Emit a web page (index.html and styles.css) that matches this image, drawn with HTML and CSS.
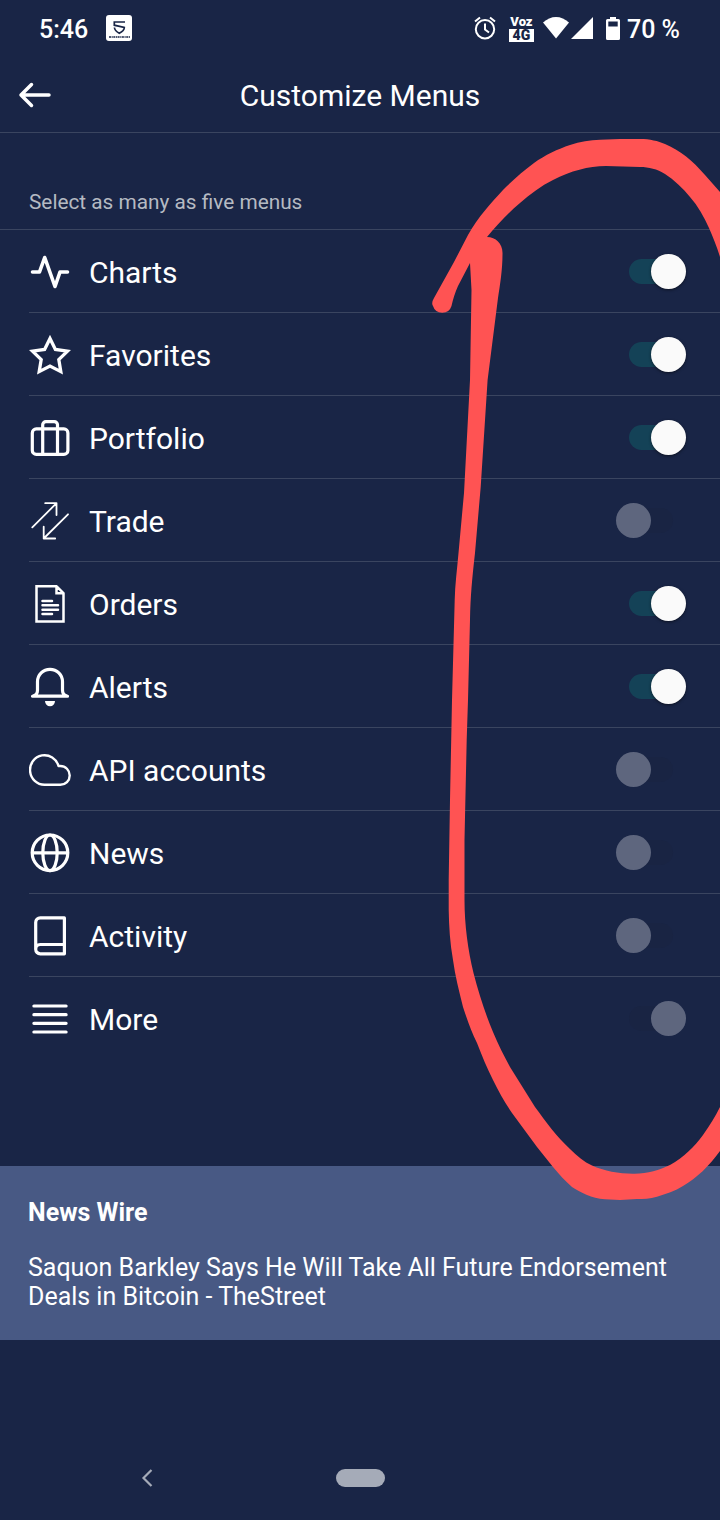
FILE: index.html
```html
<!DOCTYPE html>
<html lang="en">

<head>
    <meta charset="UTF-8">
    <title>Customize Menus</title>
    <link rel="stylesheet" href="styles.css">
</head>

<body>
    <div class="screen">
        <div class="status-bar">
            <span class="time">5:46</span>
            <svg class="app-icon" width="26" height="26" viewBox="0 0 26 26">
                <rect width="26" height="26" rx="3" fill="#fff" />
                <path d="M19 7H8.3v3.200l10 2.200c0 2.500-2 4.300-5 5.800-2.800-1.400-4.600-3-4.900-5.700" fill="none" stroke="#192546" stroke-width="1.700" />
                <path d="M3 22h21" stroke="#192546" stroke-width="1.300" stroke-dasharray="2 .6 1.200 .5" />
            </svg>
            <div class="status-icons">
                <svg class="alarm" width="22" height="24" viewBox="0 0 22 24" fill="none" stroke="#fff" stroke-width="2">
                    <circle cx="11" cy="13.200" r="9.200" />
                    <path d="M11 7.500v6l4 3M1 5.500l5-4M21 5.500l-5-4" />
                </svg>
                <div class="volte">
                    <span class="voz">Voz</span>
                    <span class="lte">4G</span>
                </div>
                <svg class="wifi" width="26" height="22" viewBox="0 0 26 22">
                    <path d="M13 21.500L0 5.600C4 2 8.300 0 13 0s9 2 13 5.600z" fill="#fff" />
                </svg>
                <svg class="signal" width="22" height="22" viewBox="0 0 22 22">
                    <path d="M0 22L22 0v22z" fill="#fff" />
                </svg>
                <svg class="battery" width="14" height="23" viewBox="0 0 14 23">
                    <path d="M4 0h6v2h2.500a1.500 1.500 0 0 1 1.500 1.500v18a1.500 1.500 0 0 1-1.500 1.500h-11A1.500 1.500 0 0 1 0 21.500v-18a1.500 1.500 0 0 1 1.500-1.500H4z" fill="#fff" />
                    <path d="M2.300 4.500h9.400v5H2.300z" fill="#192546" />
                </svg>
                <span class="percent">70 %</span>
            </div>
        </div>

        <header class="header">
            <svg class="back" width="34" height="26" viewBox="0 0 34 26" fill="none" stroke="#fff" stroke-width="3.500" stroke-linecap="round" stroke-linejoin="round">
                <path d="M31 13H3M13.500 2.500L3 13l10.500 10.500" />
            </svg>
            <h1>Customize Menus</h1>
        </header>

        <p class="hint">Select as many as five menus</p>

        <ul class="menu">
            <li class="item">
                <svg class="icon pulse" viewBox="0 0 42 42"><path d="M3.500 22h7L15.700 7.500 26 36.500 31 22h7.500" /></svg>
                <div class="row"><span class="label">Charts</span><span class="switch on"></span></div>
            </li>
            <li class="item">
                <svg class="icon star" viewBox="0 0 42 42"><path d="M21 5.400l5.400 11L38.500 18.100l-8.700 8.500 2 12L21 33l-10.800 5.600 2-12L3.500 18.100l12.100-1.700z" /></svg>
                <div class="row"><span class="label">Favorites</span><span class="switch on"></span></div>
            </li>
            <li class="item">
                <svg class="icon" viewBox="0 0 42 42">
                    <rect x="3.300" y="12.900" width="35.600" height="25.500" rx="4" />
                    <path d="M13.700 38V8.800a3.200 3.200 0 0 1 3.200-3.200h8.400a3.200 3.200 0 0 1 3.200 3.200V38" />
                </svg>
                <div class="row"><span class="label">Portfolio</span><span class="switch on"></span></div>
            </li>
            <li class="item">
                <svg class="icon hair" viewBox="0 0 42 42"><path d="M3.300 28.400L27.500 4.200M16.200 4.200h11.300V16M39 15.300L14.700 39.500M14.700 27.700v11.800h11.500" /></svg>
                <div class="row"><span class="label">Trade</span><span class="switch"></span></div>
            </li>
            <li class="item">
                <svg class="icon doc" viewBox="0 0 42 42"><path d="M7.500 4.200h20l7 7v28.300h-27zM27.500 4.200v7h7M13.500 19h9.500M13.500 23.300h15.500M13.500 27.700h15.500M13.500 32h9.500" /></svg>
                <div class="row"><span class="label">Orders</span><span class="switch on"></span></div>
            </li>
            <li class="item">
                <svg class="icon" viewBox="0 0 42 42">
                    <path d="M3.500 31.200h35c-3.500-.7-5-2.500-5-6V16.800a12.500 12.500 0 0 0-25 0v8.400c0 3.500-1.500 5.300-5 6z" />
                    <path class="fill" d="M16 36h10a5 5.300 0 0 1-10 0z" />
                </svg>
                <div class="row"><span class="label">Alerts</span><span class="switch on"></span></div>
            </li>
            <li class="item">
                <svg class="icon thin" viewBox="0 0 42 42"><path d="M29.500 18A14.500 14.800 0 1 0 15.500 36.800h15.800a9.400 9.400 0 0 0 0-18.800z" /></svg>
                <div class="row"><span class="label">API accounts</span><span class="switch"></span></div>
            </li>
            <li class="item">
                <svg class="icon" viewBox="0 0 42 42">
                    <circle cx="21" cy="21.800" r="17.800" />
                    <ellipse cx="21" cy="21.800" rx="7.200" ry="17.800" />
                    <path d="M3.500 21.800h35" />
                </svg>
                <div class="row"><span class="label">News</span><span class="switch"></span></div>
            </li>
            <li class="item">
                <svg class="icon" viewBox="0 0 42 42"><path d="M6.700 35.500V8.500a4.600 4.600 0 0 1 4.600-4.600h24.100v35.900H11.300a4.500 4.500 0 0 1-4.600-4.500c0-3 1.600-4.800 4.600-4.800h24" /></svg>
                <div class="row"><span class="label">Activity</span><span class="switch"></span></div>
            </li>
            <li class="item">
                <svg class="icon" viewBox="0 0 42 42"><path d="M4.900 9h32.200M4.900 17.700h32.200M4.900 26.300h32.200M4.900 35h32.200" /></svg>
                <div class="row"><span class="label">More</span><span class="switch locked"></span></div>
            </li>
        </ul>

        <section class="news">
            <h2>News Wire</h2>
            <p>Saquon Barkley Says He Will Take All Future Endorsement Deals in Bitcoin - TheStreet</p>
        </section>

        <nav class="nav-bar">
            <svg width="12" height="18" viewBox="0 0 12 18" fill="none" stroke="#a5abb8" stroke-width="2.200">
                <path d="M10.500 1L2.500 9l8 8" />
            </svg>
            <span class="pill"></span>
        </nav>

        <!-- hand-drawn red marker -->
        <svg class="marker" width="720" height="1520" viewBox="0 0 720 1520">
            <path d="M434 298L454 262 468 235C478 217 491 203 503 190 513 180 523 171 534 163 545 155 558 149 570 145 580 141.500 590 140 600 139.700L620 139H640C650 139 658 141 665 144 681 151 692 160 705 175L720 192V257C717 247 713 237 709 228 704 217 698 206 690 197 683 188 674 180 665 174 657 169 649 167 640 167L606 166C588 166 571 171 553 180 541 186 530 194 520 203 508 213 497 225 487 237 496 237 503 244 502.500 254 502.500 270 500 285 498 298L487.600 380 480.700 487 475 553C472 580 470.500 595 470 620L468 700 466.700 740 464.500 840V900C464.500 925 468 950 473.500 973 479 994 485 1013 493 1032 498 1044 504 1056 510 1067L535 1107C546 1122 557 1137 570 1149 577 1156 584 1162 592 1165.500 604 1171 619 1173.700 633 1173.700 647 1174 659 1170 670 1165 684 1157 694 1147 703 1135 710 1125 715 1117 720 1107V1151C709 1166 697 1178 683 1186 675 1191 666 1194 657 1196.700 650 1199 643 1199 637 1199L620 1200 605 1199.300C598 1199 592 1197 587 1195 581 1192 576 1190 572 1187 565 1181 559 1174 553 1167L537 1147 512 1113C505 1103 499 1092 493 1080 487 1068 482 1056 477 1043 471 1031 467 1019 463 1007 459 991 455 975 453 960 450 943 449 927 448.700 910V880L450 800 452 700 454.700 600C455 585 457 570 458.500 553L464 493 470 380 471.500 290 470 263 458 286C455 293 453 299 451.500 306A9.700 9.700 0 0 1 433 306Q431 303 434 298z" />
        </svg>
    </div>
</body>

</html>
```

FILE: styles.css
```css
* {
    box-sizing: border-box;
}

body {
    margin: 0;
    background: #192546;
    color: #fff;
    font-family: Roboto, sans-serif;
}

.screen {
    position: relative;
    width: 720px;
    height: 1520px;
    overflow: hidden;
    display: flex;
    flex-direction: column;
}

.status-bar {
    height: 58px;
    padding: 0 40px 0 39px;
    display: flex;
    align-items: center;
}

.time {
    width: 67px;
    font-size: 25px;
    font-weight: 500;
}

.app-icon {
    margin-bottom: 2px;
}

.status-icons {
    margin-left: auto;
    display: flex;
    align-items: center;
}

.alarm,
.volte,
.wifi,
.signal,
.battery {
    margin-bottom: 2px;
}

.volte {
    width: 25px;
    margin-left: 13px;
    margin-right: 9px;
    display: flex;
    flex-direction: column;
    align-items: center;
    font-weight: 900;
}

.voz {
    font-size: 13px;
    line-height: 15px;
}

.lte {
    width: 25px;
    background: #fff;
    color: #192546;
    font-size: 14px;
    line-height: 13px;
    text-align: center;
}

.signal {
    margin-left: 2px;
    margin-right: 13px;
}

.percent {
    margin-left: 7px;
    font-size: 25px;
    font-weight: 500;
}

.header {
    height: 75px;
    padding: 0 18px;
    border-bottom: 1px solid #3a4560;
    display: grid;
    grid-template-columns: 34px 1fr 34px;
    align-items: center;
}

h1 {
    margin: 0;
    font-size: 30px;
    font-weight: 400;
    text-align: center;
}

.hint {
    height: 97px;
    margin: 0;
    padding: 56px 29px 0;
    border-bottom: 1px solid #3a4560;
    color: #b5bac2;
    font-size: 20.8px;
    line-height: 26px;
}

.menu {
    list-style: none;
    height: 936px;
    margin: 0;
    padding: 0 0 0 29px;
}

.item {
    height: 83px;
    border-bottom: 1px solid #3a4560;
    display: flex;
    align-items: center;
    gap: 18px;
}

.item:last-child {
    border-bottom-color: transparent;
}

.icon {
    width: 42px;
    height: 42px;
    fill: none;
    stroke: #fff;
    stroke-width: 3.2;
    stroke-linecap: round;
    stroke-linejoin: round;
}

.icon.pulse {
    stroke-width: 3.6;
}

.icon.star {
    stroke-width: 3.3;
    stroke-linejoin: miter;
}

.icon.hair {
    stroke-width: 1.8;
}

.icon.doc {
    stroke-width: 2.5;
    stroke-linejoin: miter;
}

.icon.thin {
    stroke-width: 2.4;
}

.icon .fill {
    fill: #fff;
    stroke: none;
}

.row {
    flex: 1;
    padding: 1px 34px 0 0;
    display: flex;
    align-items: center;
    justify-content: space-between;
}

.label {
    font-size: 30px;
    line-height: 36px;
    padding-top: 3px;
}

.switch {
    width: 70px;
    display: grid;
    align-items: center;
}

.switch::before,
.switch::after {
    content: "";
    grid-area: 1 / 1;
}

.switch::before {
    width: 44px;
    height: 25px;
    border-radius: 13px;
    background: #192443;
    justify-self: center;
}

.switch::after {
    width: 35px;
    height: 35px;
    border-radius: 50%;
    background: #5e667e;
}

.switch.on::before {
    background: #144257;
}

.switch.on::after {
    justify-self: end;
    background: #fafafa;
    box-shadow: 0 1px 3px rgba(0, 0, 0, 0.5);
}

.switch.locked::after {
    justify-self: end;
}

.news {
    height: 174px;
    padding: 32px 28px 0;
    background: #485984;
}

.news h2 {
    margin: 0 0 26px;
    font-size: 25px;
    font-weight: 700;
    line-height: 29px;
}

.news p {
    margin: 0;
    font-size: 24.98px;
    line-height: 29px;
}

.nav-bar {
    margin-top: auto;
    height: 84px;
    padding-left: 141px;
    display: flex;
    align-items: center;
}

.pill {
    width: 49px;
    height: 18px;
    margin-left: 183px;
    border-radius: 9px;
    background: #a5abb8;
}

.marker {
    position: absolute;
    top: 0;
    left: 0;
    fill: #ff5353;
}
```
